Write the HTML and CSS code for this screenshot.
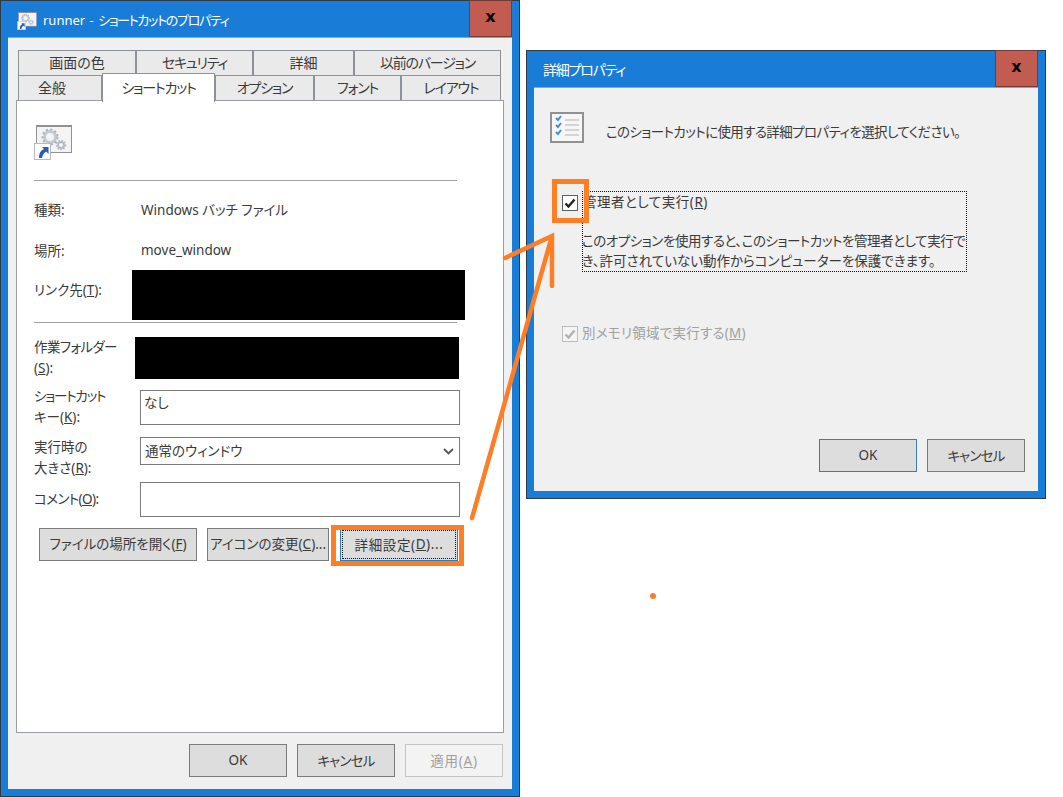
FILE: index.html
```html
<!DOCTYPE html>
<html lang="ja">
<head>
  <meta charset="utf-8">
  <title>runner - ショートカットのプロパティ</title>
  <link rel="stylesheet" href="styles.css">
</head>
<body>

  <svg class="defs" width="0" height="0">
    <symbol id="shortcutIcon" viewBox="0 0 38 35">
      <rect x="2.5" y="0.5" width="35" height="27" fill="#f4f4f5" stroke="#8f9194"/>
      <rect x="2" y="0" width="36" height="2" fill="#8f9194"/>
      <circle cx="16" cy="12" r="5.5" fill="none" stroke="#c3cad1" stroke-width="3"/>
      <circle cx="16" cy="12" r="7.500" fill="none" stroke="#aeb6be" stroke-width="2" stroke-dasharray="2.4 2"/>
      <circle cx="27" cy="20" r="3" fill="none" stroke="#b4bac1" stroke-width="1.800"/>
      <circle cx="27" cy="20" r="4.500" fill="none" stroke="#aeb6be" stroke-width="1.500" stroke-dasharray="1.600 1.400"/>
      <rect x="0.5" y="18.5" width="16" height="16" fill="#fff" stroke="#b9b9b9"/>
      <path d="M8 22 H14.500 V29 L12.200 26.600 C10 28 8.500 30 8 33 H5 C5 28 7 25 10 24 Z" fill="#2a5ea8"/>
    </symbol>
  </svg>

  <!-- Shortcut properties window -->
  <div class="window props">
    <div class="titlebar">
      <svg class="title-icon"><use href="#shortcutIcon"/></svg>
      <span class="title-text">runner - <span class="title-kana">ショートカットのプロパティ</span></span>
      <div class="close-btn">x</div>
    </div>

    <div class="client">
      <div class="tab-row">
        <div class="tab w118">画面の色</div>
        <div class="tab kana w117">セキュリティ</div>
        <div class="tab w101">詳細</div>
        <div class="tab kana w147">以前のバージョン</div>
      </div>
      <div class="tab-row">
        <div class="tab tab-general w84">全般</div>
        <div class="tab kana tab-active w113">ショートカット</div>
        <div class="tab kana w99">オプション</div>
        <div class="tab kana w87">フォント</div>
        <div class="tab kana w100">レイアウト</div>
      </div>

      <div class="panel">
        <div class="icon-row">
          <svg class="big-icon"><use href="#shortcutIcon"/></svg>
        </div>
        <div class="sep"></div>

        <div class="field first-field"><span>種類:</span><span>Windows バッチ ファイル</span></div>
        <div class="field"><span>場所:</span><span>move_window</span></div>
        <div class="field link-field">
          <span>リンク先(<u>T</u>):</span>
          <div class="redact redact-link"></div>
        </div>
        <div class="sep sep-second"></div>

        <div class="field-tall work-field">
          <span><span class="tight">作業フォルダー</span><br>(<u>S</u>):</span>
          <div class="redact redact-work"></div>
        </div>
        <div class="field-tall key-field">
          <span><span class="kana">ショートカット</span><br>キー(<u>K</u>):</span>
          <div class="textbox">なし</div>
        </div>
        <div class="field-tall size-field">
          <span>実行時の<br>大きさ(<u>R</u>):</span>
          <div class="combo">
            <span>通常のウィンドウ</span>
            <svg width="11" height="7" viewBox="0 0 11 7"><path d="M1 1 L5.500 5.500 L10 1" fill="none" stroke="#555" stroke-width="1.800"/></svg>
          </div>
        </div>
        <div class="field-tall comment-field">
          <span class="tight">コメント(<u>O</u>):</span>
          <div class="textbox"></div>
        </div>

        <div class="panel-buttons">
          <button class="btn w158">ファイルの場所を開く(<u>F</u>)</button>
          <button class="btn w122">アイコンの変更(<u>C</u>)...</button>
          <button class="btn btn-focus w118"><span>詳細設定(<u>D</u>)...</span></button>
        </div>
      </div>

      <div class="footer">
        <button class="btn w98">OK</button>
        <button class="btn btn-kana w98">キャンセル</button>
        <button class="btn btn-disabled w98">適用(<u>A</u>)</button>
      </div>
    </div>
  </div>

  <!-- Advanced properties window -->
  <div class="window advanced">
    <div class="titlebar">
      <span class="title-text title-plain">詳細プロパティ</span>
      <div class="close-btn">x</div>
    </div>

    <div class="client client-advanced">
      <div class="intro">
        <svg width="34" height="31" viewBox="0 0 34 31">
          <rect x="1" y="1" width="32" height="29" fill="#f6f6f6" stroke="#919191" stroke-width="2"/>
          <path d="M6 6 L8 8 L11 4 M6 13 L8 15 L11 11 M6 20 L8 22 L11 18" fill="none" stroke="#3f8fd8" stroke-width="2"/>
          <path d="M15 8 H29 M15 13 H29 M15 18 H29 M15 23 H29" stroke="#c9c9c9" stroke-width="1.500"/>
        </svg>
        <span>このショートカットに使用する詳細プロパティを選択してください。</span>
      </div>

      <div class="option">
        <div class="check">
          <svg width="14" height="14" viewBox="0 0 14 14"><path d="M2.500 7.500 L5.500 10.500 L11.500 3.500" fill="none" stroke="#222" stroke-width="2.400"/></svg>
        </div>
        <div class="option-box">
          <div class="option-label">管理者として実行(<u>R</u>)</div>
          <p><span class="first-line">このオプションを使用すると、このショートカットを管理者として実行で</span><br>き、許可されていない動作からコンピューターを保護できます。</p>
        </div>
      </div>

      <div class="option option-disabled">
        <div class="check check-disabled">
          <svg width="14" height="14" viewBox="0 0 14 14"><path d="M2.500 7.500 L5.500 10.500 L11.500 3.500" fill="none" stroke="#b0b0b0" stroke-width="2.400"/></svg>
        </div>
        <div class="disabled-label">別メモリ領域で実行する(<u>M</u>)</div>
      </div>

      <div class="footer footer-advanced">
        <button class="btn btn-default w98">OK</button>
        <button class="btn btn-kana w98">キャンセル</button>
      </div>
    </div>
  </div>

  <!-- Orange annotations drawn on top of the screenshot -->
  <svg class="notes" width="1063" height="797" viewBox="0 0 1063 797">
    <g fill="none" stroke="#fd7e24" stroke-linecap="round">
      <rect x="333.500" y="527.500" width="128" height="36" stroke-width="5"/>
      <rect x="554.500" y="181.500" width="32" height="39" stroke-width="5"/>
      <path d="M472 518 L552 236 M505 258 L552 236 L552 286" stroke-width="4.500"/>
    </g>
    <circle cx="653" cy="596" r="3" fill="#fd7e24"/>
  </svg>

</body>
</html>
```

FILE: styles.css
```css
* {
  box-sizing: border-box;
}

body {
  margin: 0;
  width: 1063px;
  height: 797px;
  position: relative;
  overflow: hidden;
  background: #fff;
  color: #3a3a3a;
  font-family: "Noto Sans", "Noto Sans CJK JP", sans-serif;
  font-size: 13.5px;
  font-feature-settings: "palt";
}

.defs {
  position: absolute;
}

.notes {
  position: absolute;
  top: 0;
  left: 0;
}

.kana {
  letter-spacing: -1.2px;
}

.tight {
  letter-spacing: -0.6px;
}

/* windows */
.window {
  position: absolute;
  display: flex;
  flex-direction: column;
  background: #197dd7;
  border: 1px solid #2d3a46;
  padding: 0 7px 7px 7px;
}

.props {
  top: 0;
  left: 0;
  width: 520px;
  height: 797px;
}

.advanced {
  top: 50px;
  left: 526px;
  width: 520px;
  height: 449px;
}

.titlebar {
  display: flex;
  align-items: center;
  height: 36px;
  flex: none;
  color: #fff;
  font-size: 13px;
}

.title-icon {
  width: 20px;
  height: 18px;
  margin: 3px 6px 0 9px;
  flex: none;
}

.title-text {
  flex: 1;
  white-space: nowrap;
  word-spacing: 1px;
}

.title-kana {
  letter-spacing: -1.3px;
}

.title-plain {
  padding-left: 9px;
  font-size: 14px;
  letter-spacing: -1.2px;
}

.close-btn {
  width: 43px;
  height: 37px;
  margin-top: -1px;
  display: flex;
  align-items: center;
  justify-content: center;
  background: #c25b50;
  border: 1px solid #6f3c38;
  color: #000;
  font-family: "DejaVu Sans", sans-serif;
  font-size: 16px;
  font-weight: bold;
  padding-bottom: 4px;
}

.client {
  flex: 1;
  display: flex;
  flex-direction: column;
  background: #f0f0f0;
  border-top: 1px solid #7fa9cf;
  padding-top: 12px;
}

/* tabs */
.tab-row {
  display: flex;
  height: 25px;
  margin-left: 10px;
  flex: none;
}

.tab {
  height: 26px;
  display: flex;
  align-items: center;
  justify-content: center;
  padding-bottom: 3px;
  background: #ebeaeb;
  border: 1px solid #8d9199;
  border-bottom: none;
  white-space: nowrap;
  font-size: 14px;
}

.tab-general {
  padding-right: 16px;
}

.tab-active {
  position: relative;
  z-index: 2;
  height: 29px;
  margin-top: -2px;
  background: #fff;
  padding-bottom: 2px;
}

.w84 { width: 84px; }
.w87 { width: 87px; }
.w98 { width: 98px; }
.w99 { width: 99px; }
.w100 { width: 100px; }
.w101 { width: 101px; }
.w113 { width: 113px; }
.w117 { width: 117px; }
.w118 { width: 118px; }
.w122 { width: 122px; }
.w147 { width: 147px; }
.w158 { width: 158px; }

/* main panel */
.panel {
  position: relative;
  width: 488px;
  height: 633px;
  margin-left: 8px;
  padding-left: 17px;
  background: #fff;
  border: 1px solid #9a9da3;
  flex: none;
}

.icon-row {
  height: 79px;
  padding-top: 24px;
}

.big-icon {
  display: block;
  width: 38px;
  height: 35px;
}

.sep {
  width: 423px;
  height: 1px;
  background: #a0a0a0;
}

.sep-second {
  margin-top: 2px;
}

.field {
  display: grid;
  grid-template-columns: 107px 1fr;
  align-items: center;
  height: 40px;
}

.first-field {
  margin-top: 8px;
  margin-bottom: 1px;
}

.link-field {
  height: 50px;
  align-items: start;
}

.link-field > span {
  margin-top: 9px;
}

.field-tall {
  display: grid;
  grid-template-columns: 106px 320px;
  line-height: 21px;
}

.redact {
  background: #000;
}

.redact-link {
  width: 333px;
  height: 50px;
  margin-left: -9px;
}

.redact-work {
  height: 42px;
  margin-left: -5px;
  width: 324px;
}

.work-field {
  margin-top: 14px;
  height: 49px;
}

.key-field {
  height: 51px;
}

.key-field .textbox {
  margin-top: 4px;
}

.size-field {
  height: 45px;
}

.comment-field {
  align-items: center;
  height: 35px;
}

.textbox {
  height: 35px;
  padding: 2px 3px;
  background: #fff;
  border: 1px solid #7a7a7a;
}

.combo {
  height: 28px;
  display: flex;
  align-items: center;
  justify-content: space-between;
  padding: 0 5px 0 4px;
  background: #fff;
  border: 1px solid #7a7a7a;
}

/* buttons */
.btn {
  height: 33px;
  padding: 0 0 1px;
  background: #dddddd;
  border: 1px solid #7a7a7a;
  color: #3a3a3a;
  font: inherit;
  font-feature-settings: inherit;
  white-space: nowrap;
}

.btn-kana {
  letter-spacing: -0.8px;
}

.panel-buttons {
  display: flex;
  margin: 11px 0 0 5px;
  gap: 10px;
}

.panel-buttons .btn {
  padding-bottom: 3px;
}

.panel-buttons .btn-focus {
  margin-left: 1px;
  padding: 1px;
  border-color: #2b7cc4;
  letter-spacing: 0.6px;
}

.btn-focus span {
  display: flex;
  align-items: center;
  justify-content: center;
  height: 100%;
  padding-bottom: 2px;
  border: 1px dotted #111;
}

.btn-disabled {
  background: #f3f3f3;
  border-color: #c4c4c4;
  color: #a0a0a0;
  letter-spacing: 0.8px;
}

.btn-default {
  border-color: #3a7cb4;
}

.footer {
  display: flex;
  justify-content: flex-end;
  gap: 10px;
  padding: 11px 9px 0 0;
}

/* advanced window */
.client-advanced {
  padding-top: 0;
}

.intro {
  display: flex;
  align-items: center;
  gap: 22px;
  margin: 24px 0 0 16px;
  height: 31px;
}

.intro span {
  margin-top: 6px;
  letter-spacing: -0.6px;
}

.option {
  display: flex;
  align-items: flex-start;
  gap: 4px;
  margin: 48px 0 0 28px;
}

.check {
  width: 16px;
  height: 16px;
  margin-top: 4px;
  display: flex;
  align-items: center;
  justify-content: center;
  background: #fff;
  border: 1px solid #5f5f5f;
  flex: none;
}

.check-disabled {
  margin-top: 0;
  background: #f4f4f4;
  border-color: #bdbdbd;
}

.option-box {
  width: 385px;
  height: 81px;
  border: 1px dotted #111;
  line-height: 20px;
  white-space: nowrap;
}

.option-label {
  letter-spacing: 0.5px;
}

.option-box p {
  margin: 19px 0 0 -1px;
}

.first-line {
  letter-spacing: -0.45px;
}

.option-disabled {
  margin-top: 53px;
  align-items: center;
}

.disabled-label {
  margin-top: -3px;
  letter-spacing: 0.25px;
  color: #a0a0a0;
}

.footer-advanced {
  margin-top: auto;
  padding: 0 13px 19px 0;
}
```
